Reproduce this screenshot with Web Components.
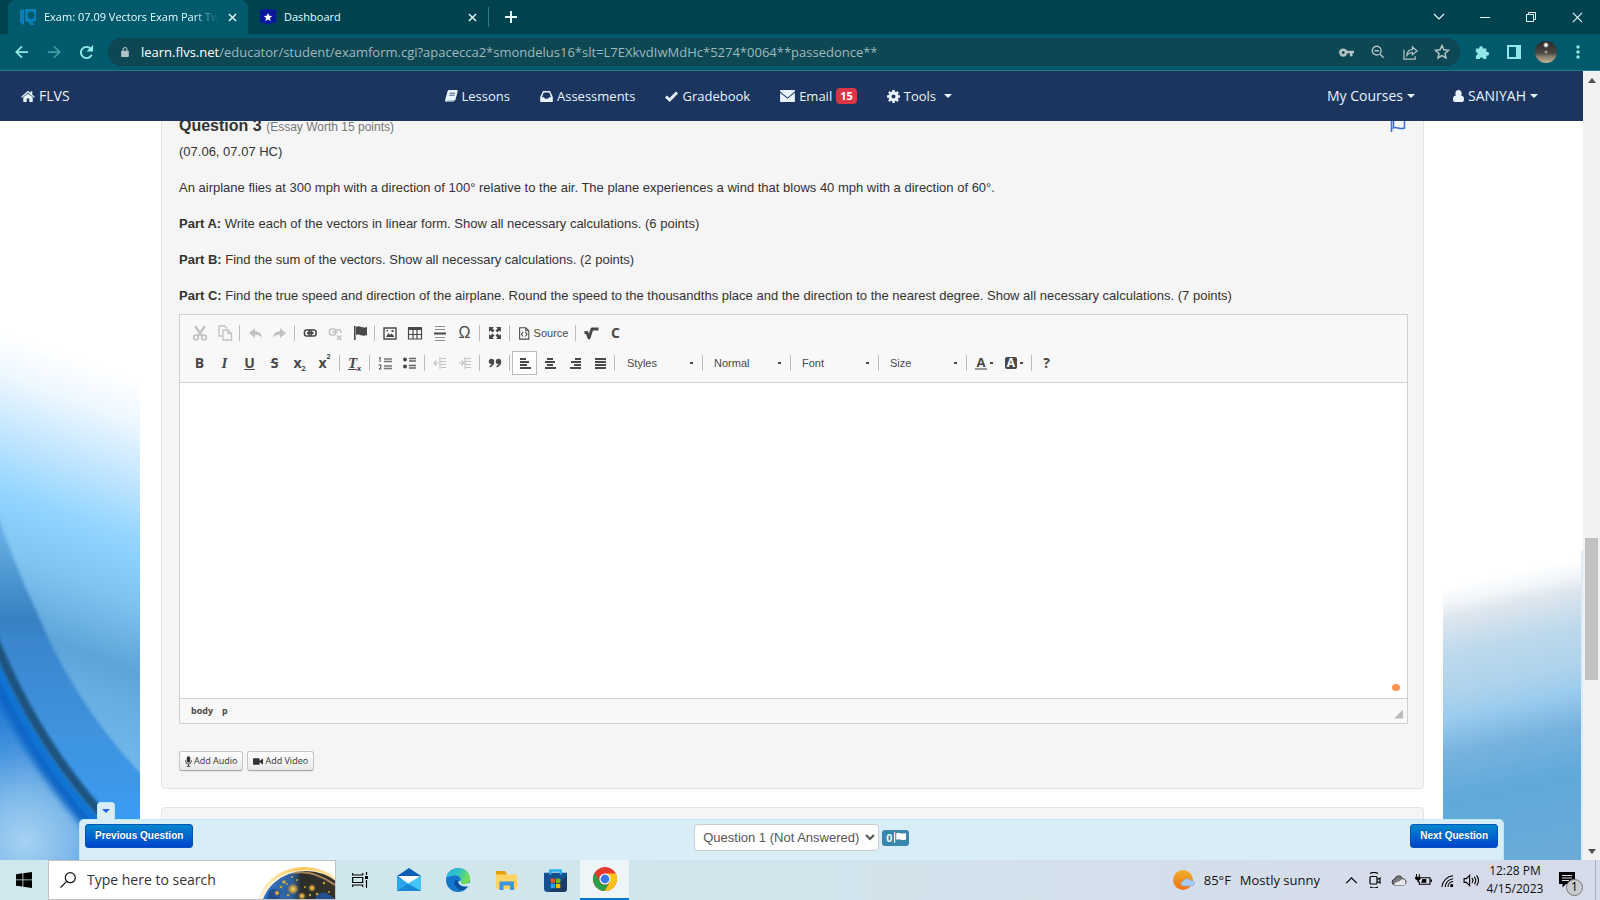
<!DOCTYPE html>
<html lang="en">
<head>
<meta charset="utf-8">
<title>Exam: 07.09 Vectors Exam Part Two</title>
<style>
html,body{margin:0;height:100%;overflow:hidden;background:#fff}
body{font-family:"Liberation Sans",Arial,sans-serif;font-size:13px;color:#333}
</style>
</head>
<body>
<exam-desktop></exam-desktop>
<script>
const UI = '"Open Sans","Noto Sans",sans-serif';
function define(name, css, html, ready) {
  const t = document.createElement('template');
  t.innerHTML = `<style>*{box-sizing:border-box}${css}</style>${html}`;
  customElements.define(name, class extends HTMLElement {
    connectedCallback() {
      if (this.shadowRoot) return;
      this.attachShadow({mode: 'open'}).appendChild(t.content.cloneNode(true));
      if (ready) ready.call(this, this.shadowRoot);
    }
  });
}

/* ---------- icons: [viewBox width, viewBox height, markup] ---------- */
const S = 'fill="none" stroke="currentColor"';
const ICONS = {
  close: [10,10,`<path ${S} stroke-width="1.5" d="M1 1l8 8M9 1l-8 8"/>`],
  closeThin: [12,12,`<path ${S} stroke-width="1.2" d="M1 1l10 10M11 1L1 11"/>`],
  plus: [12,12,`<path ${S} stroke-width="2" d="M6 0v12M0 6h12"/>`],
  chevDown: [12,8,`<path ${S} stroke-width="1.2" d="M1 1l5 5 5-5"/>`],
  min: [10,10,`<path ${S} d="M0 5.500h10"/>`],
  restore: [10,10,`<path ${S} d="M.5 2.500h7v7h-7zM2.500 2.500v-2h7v7h-2"/>`],
  flvs: [16,16,`<path fill="#0b7fb8" d="M0 1l4-1v16l-2-1-2-2zM5 0h11v12l-4 1 3 3h-4l-3-3-3-1z"/><path fill="#005a6b" d="M8 4c2-2 5-2 6 0 1 3 0 6-3 6S7 7 8 4z"/>`],
  badge: [16,16,`<path fill="#0a189c" d="M0 1q8-2 16 0v13l-5 0-3 2-3-2H0z"/><path fill="#fff" d="M8 4l1.200 2.800 3 .2-2.300 2 .8 3L8 10.400 5.300 12l.8-3-2.300-2 3-.2z"/>`],
  back: [16,16,`<path ${S} stroke-width="2" d="M15 8H2M8 1.500L1.500 8 8 14.500"/>`],
  fwd: [16,16,`<path ${S} stroke-width="2" d="M1 8h13M8 1.500L14.500 8 8 14.500"/>`],
  reload: [16,16,`<path ${S} stroke-width="2" d="M13.500 10.500A6 6 0 1 1 12.500 4"/><path fill="currentColor" d="M15 0v7H8z"/>`],
  lock: [10,13,`<path fill="currentColor" d="M1 5h8a1 1 0 0 1 1 1v6a1 1 0 0 1-1 1H1a1 1 0 0 1-1-1V6a1 1 0 0 1 1-1z"/><path ${S} stroke-width="1.400" d="M2.500 6V3.200a2.500 2.500 0 0 1 5 0V6"/>`],
  key: [16,16,`<circle cx="4.500" cy="8" r="3" ${S} stroke-width="2.800"/><path ${S} stroke-width="2.800" d="M8 7.500h8M13 8v4"/>`],
  zoomOut: [16,16,`<circle cx="6.500" cy="6.500" r="5" ${S} stroke-width="1.600"/><path ${S} stroke-width="1.600" d="M10.500 10.500l4 4M4 6.500h5"/>`],
  share: [16,16,`<path ${S} stroke-width="1.300" d="M1 5v10h12v-3M4 11c.5-4 3-6 6-6V2l5 4.500-5 4V8c-3 0-4.500 1-6 3z"/>`],
  star: [16,16,`<path ${S} stroke-width="1.500" d="M8 1.500l1.900 4.300 4.600.5-3.500 3.100 1 4.600-4-2.400L4 14l1-4.600L1.500 6.300l4.600-.5z"/>`],
  puzzle: [16,16,`<path fill="currentColor" d="M1 4h4a2 2 0 1 1 4-1v1h4v4a2.200 2.200 0 1 1 0 4v4H9.500a2 2 0 0 0-4 0H1v-4a2 2 0 0 0 0-4z"/>`],
  panel: [14,14,`<path ${S} stroke-width="2" d="M1 1h12v12H1z"/><path fill="currentColor" d="M9 0h5v14H9z"/>`],
  dots: [4,14,`<g fill="currentColor"><circle cx="2" cy="2" r="1.700"/><circle cx="2" cy="7" r="1.700"/><circle cx="2" cy="12" r="1.700"/></g>`],
  home: [16,14,`<path fill="currentColor" d="M8 1L0 8l1 1 7-6 7 6 1-1-3-2.600V1.500h-2v2zM8 4L2.500 8.500V14h4v-4h3v4h4V8.500z"/>`],
  book: [16,15,`<path fill="currentColor" d="M5 0h9.500c1 0 1.500.8 1.200 1.800L13 12c-.3 1-1 1.500-2 1.500H2.500c-.6 0-.6.800 0 .8H11l-.3.700H2C.5 15-.3 13.500.2 12L3 2C3.300.8 4 0 5 0z"/><path stroke="#1c355e" d="M6 4h6.500M5.300 6.500h6.500" fill="none"/>`],
  inbox: [16,14,`<path fill="currentColor" fill-rule="evenodd" d="M3.500 0h9L16 7.500V14H0V7.500zM4.500 2L2.200 8H5l1 2h4l1-2h2.800L11.500 2z"/>`],
  check: [16,13,`<path ${S} stroke-width="3.600" d="M1.200 6.500l4.500 4.300L14.800 1.500"/>`],
  mail: [16,13,`<path fill="currentColor" d="M0 0h16v1.500L8 8 0 1.500zM0 3l8 6.500L16 3v10H0z"/>`],
  gear: [16,16,`<circle cx="8" cy="8" r="4.300" ${S} stroke-width="3.600"/><path ${S} stroke-width="3" d="M8 0v3M8 13v3M0 8h3M13 8h3M2.300 2.300l2 2M11.700 11.700l2 2M2.300 13.700l2-2M11.700 4.300l2-2"/>`],
  user: [14,15,`<path fill="currentColor" d="M7 0c2.500 0 4 2 4 4.200S9.500 9 7 9 3 6.500 3 4.200 4.500 0 7 0zM3 7c2.500 2.400 5.500 2.400 8 0 2 .5 3 2 3 4.500 0 2.700-1 3.500-2.500 3.500h-9C1 15 0 14.200 0 11.500 0 9 1 7.500 3 7z"/>`],
  caret: [8,4,`<path fill="currentColor" d="M0 0h8L4 4z"/>`],
  flagLine: [16,16,`<path ${S} stroke-width="1.500" d="M1.500 1v15M3.500 3c3-2 6 2 11 0v9c-5 2-8-2-11 0z"/>`],
  flagSolid: [16,14,`<path fill="currentColor" d="M0 0h1.600v14H0zM3 1.500c4-2.500 7 2 13-.5v8.500c-5 2.500-8-2-13 .5z"/>`],
  cut: [16,16,`<path ${S} stroke-width="2.200" d="M3 1l7 10M13 1L6 11"/><circle cx="4" cy="12.500" r="2.300" ${S} stroke-width="1.800"/><circle cx="12" cy="12.500" r="2.300" ${S} stroke-width="1.800"/>`],
  copy: [16,16,`<path ${S} stroke-width="1.300" d="M5 11H2V1h5.500L10 3.500M6 5h5l3.500 3.500V15H6zM11 5v3.500h3.500"/>`],
  undo: [16,16,`<path fill="currentColor" d="M2 8l6-5v3.200c4 0 6.500 2 7 6.800-1.500-2.500-3.500-3.300-7-3.300V13z"/>`],
  redo: [16,16,`<path fill="currentColor" d="M14 8L8 3v3.200c-4 0-6.500 2-7 6.800 1.500-2.500 3.500-3.300 7-3.300V13z"/>`],
  link: [16,16,`<rect x="2.500" y="5" width="7" height="6" rx="2" ${S} stroke-width="1.600"/><rect x="7" y="5" width="7" height="6" rx="2" ${S} stroke-width="1.600"/><path ${S} stroke-width="2" d="M5 8h6.500"/>`],
  unlink: [16,16,`<rect x="2.500" y="4" width="6" height="6" rx="2" ${S} stroke-width="1.600"/><path ${S} stroke-width="1.600" d="M5 7h6M8 4.800h4q2 0 2 3M10 10.500l4.500 4.500M14.500 10.500L10 15"/>`],
  flag: [16,16,`<path fill="currentColor" d="M2 1h1.600v14H2zM4 2c4-2.500 6 2 11 0v8c-5 2.500-7-2-11 0z"/>`],
  image: [16,16,`<path ${S} stroke-width="1.400" d="M2 3h12v11H2z"/><path fill="currentColor" d="M4 12l2.500-4L8 10l1.500-1.500L12 11v1zM9.500 5h2v2h-2zM4.500 5h1.500v1.500H4.500z"/>`],
  table: [16,16,`<path ${S} stroke-width="1.200" d="M1.500 3h13v11h-13zM6 5v9M10 5v9M1.500 9.500h13"/><path fill="currentColor" d="M1 2h14v3H1z"/>`],
  hr: [16,16,`<path ${S} d="M3 1.500h10M3 4.500h10M3 12.500h10M3 15.500h10" opacity=".6"/><path fill="currentColor" d="M2 7.500h12v2H2z"/>`],
  max: [16,16,`<g fill="currentColor"><path d="M2 2h5L5.500 3.500 7.500 5.500l-2 2-2-2L2 7zM14 2v5l-1.500-1.500-2 2-2-2 2-2L9 2zM2 14V9l1.500 1.500 2-2 2 2-2 2L7 14zM14 14H9l1.500-1.500-2-2 2-2 2 2L14 9z"/></g>`],
  source: [16,16,`<path ${S} stroke-width="1.200" d="M3 2h7l3.500 3.500V15H3zM10 2v3.500h3.500M7 7L5 9.500 7 12M9.500 7l2 2.500-2 2.500"/>`],
  sqrt: [16,16,`<path ${S} stroke-width="2.800" stroke-linejoin="round" d="M1.500 7.500h2.500L6 13l3-9h6.500"/>`],
  ol: [16,16,`<path ${S} stroke-width="1.500" d="M7 4h8M7 6.500h8M7 11h8M7 13.500h8" opacity=".75"/><path ${S} d="M3 2v5M2 3h1.500M1.500 10h2.500v2l-2 2h2.500"/>`],
  ul: [16,16,`<circle cx="3" cy="4.500" r="2" fill="currentColor"/><circle cx="3" cy="11.500" r="2" fill="currentColor"/><path ${S} stroke-width="1.500" d="M7 3.500h7M7 6h7M7 10.500h7M7 13h7" opacity=".85"/>`],
  outdent: [16,16,`<path ${S} stroke-width="1.200" d="M8 2v12M9 3.500h5M9 6.500h5M9 9.500h5M9 12.500h5M2 8h5M4.500 5.500L2 8l2.500 2.500"/>`],
  indent: [16,16,`<path ${S} stroke-width="1.200" d="M8 2v12M9 3.500h5M9 6.500h5M9 9.500h5M9 12.500h5M2 8h5M4.500 5.500L7 8l-2.500 2.500"/>`],
  quote: [16,16,`<circle cx="4.500" cy="6.500" r="2.700" fill="currentColor"/><circle cx="11.500" cy="6.500" r="2.700" fill="currentColor"/><path ${S} stroke-width="1.600" d="M6.400 6.500q0 4-3.900 5.200M13.400 6.500q0 4-3.900 5.200"/>`],
  left: [16,16,`<path ${S} stroke-width="2" d="M3 4h6M3 7h9M3 10h7M3 13h11"/>`],
  center: [16,16,`<path ${S} stroke-width="2" d="M5 4h6M3 7h10M5 10h6M3 13h11"/>`],
  right: [16,16,`<path ${S} stroke-width="2" d="M8 4h6M4 7h10M7 10h7M3 13h11"/>`],
  justify: [16,16,`<path ${S} stroke-width="2" d="M3 4h11M3 7h11M3 10h11M3 13h11"/>`],
  mic: [8,12,`<path fill="currentColor" d="M4 0a2 2 0 0 1 2 2v3.500a2 2 0 0 1-4 0V2a2 2 0 0 1 2-2z"/><path ${S} d="M.8 4.500V6a3.200 3 0 0 0 6.400 0V4.500M4 9v2.500M2 11.500h4"/>`],
  video: [12,8,`<path fill="currentColor" d="M1 0h6a1 1 0 0 1 1 1v6a1 1 0 0 1-1 1H1a1 1 0 0 1-1-1V1a1 1 0 0 1 1-1zM8 3.500L12 0v8L8 4.500z"/>`],
  windows: [16,16,`<path fill="currentColor" d="M0 2.200L6.500 1.300v6.200H0zM7.300 1.200L16 0v7.500H7.300zM0 8.300h6.500v6.300L0 13.700zM7.300 8.300H16V16l-8.700-1.200z"/>`],
  search: [16,16,`<circle cx="10.300" cy="5.700" r="5" ${S} stroke-width="1.200"/><path ${S} stroke-width="1.200" d="M6.700 9.300L.5 15.500"/>`],
  taskview: [16,16,`<path ${S} stroke-width="1.200" d="M.7 1v2h10V1M.7 5.500h10v5H.7zM.7 15v-2h10v2M14.500 0v3M14.500 8v8"/><path fill="currentColor" d="M13 4h3v3h-3z"/>`],
  mailApp: [24,24,`<path fill="#0d5fb4" d="M0 8L12 0l12 8v4H0z"/><path fill="#fff" d="M1 8h22l-11 9z"/><path fill="#2ba6ea" d="M0 8l12 8 12-8v15H0z"/><path fill="#45c4f5" d="M24 8v15L11 15.300z"/><path fill="#1786d6" d="M0 23l11-7 13 7z"/>`],
  edge: [24,24,`<defs><linearGradient id="a" x1="0" y1="0" x2="1" y2=".4"><stop offset="0" stop-color="#29b4e8"/><stop offset=".5" stop-color="#2fc3c8"/><stop offset="1" stop-color="#74df52"/></linearGradient></defs><circle cx="12" cy="12" r="12" fill="#1477c9"/><path fill="url(#a)" d="M.5 9.500C2 3.500 7 0 12.300 0 19 0 24 5 24 10.500c0 4-3 6-6 6-3.500 0-5-1.500-3.800-3C16 11 13.500 7.500 9.500 7.500 5 7.500 2 9 .5 9.500z"/><path fill="#0f4f9c" d="M9 12c-2 5 2 10 7.500 10 2.500-.8 4.500-2.500 5.800-4.700-5 2.500-11.300.7-10.500-5.300z"/><path fill="#d3e9f0" d="M14.600 12.300c-.7 1.800.3 4 3.400 4 2 .1 3.700-.6 5-1.700l1.200 1-1.500 2.700c-5 1-9.500-1-10.400-4.400z"/>`],
  folder: [24,24,`<path fill="#e3a008" d="M1 3h9l2 3v4H1z"/><path fill="#fcd364" d="M1 6.500h21V21H1z"/><path fill="#3d93dd" d="M4.500 13.500h14.500V22h-4v-4.500H8.500V22h-4z"/>`],
  store: [24,24,`<path fill="none" stroke="#28b1ee" stroke-width="2" d="M6.500 7V1.500h11V7"/><path fill="#15518f" d="M0 4h24v16q0 4-4 4H4q-4 0-4-4z"/><path fill="#1b3a66" d="M24 7v13q0 4-4 4H5z"/><path fill="none" stroke="#28b1ee" stroke-width="2" d="M6.500 6V1.500h11V6"/><path fill="#f05023" d="M7 10h4.500v4.500H7z"/><path fill="#7db900" d="M12.500 10H17v4.500h-4.500z"/><path fill="#22a6f0" d="M7 15.500h4.500V20H7z"/><path fill="#fdb900" d="M12.500 15.500H17V20h-4.500z"/>`],
  chrome: [24,24,`<circle cx="12" cy="12" r="12" fill="#e33b2e"/><path fill="#fbc116" d="M12 6.500h10.700A12 12 0 0 1 11.500 24l5.300-9z"/><path fill="#2b9f48" d="M1.600 6A12 12 0 0 0 11.500 24l5.300-9.200A5.500 5.500 0 0 1 7 14.700z"/><circle cx="12" cy="12" r="5.600" fill="#fff"/><circle cx="12" cy="12" r="4.400" fill="#3b78e7"/>`],
  weather: [22,20,`<defs><linearGradient id="w" x1="0" y1="0" x2="0" y2="1"><stop offset="0" stop-color="#f2b02c"/><stop offset="1" stop-color="#ef7114"/></linearGradient></defs><circle cx="10" cy="10" r="10" fill="url(#w)"/><path fill="#a9ccf5" stroke="#7fabe6" stroke-width=".6" d="M10.500 16a2.500 2.500 0 0 1 0-5 4 4 0 0 1 7-.5c3 0 4 1.500 4 3s-1 2.500-2.500 2.500z"/>`],
  chevUp: [14,8,`<path ${S} stroke-width="1.400" d="M1 7l6-6 6 6"/>`],
  meet: [14,16,`<rect x="2" y="4.500" width="7" height="7.500" rx="1" ${S} stroke-width="1.200"/><path ${S} stroke-width="1.200" d="M9.500 7.500l2.500-1.500v5L9.500 9.500M2 1.500q4-2 8 0M2 15q4 2 8 0"/>`],
  cloud: [18,12,`<path fill="#77797c" stroke="#222" d="M4 11a3.300 3.300 0 0 1 0-6.500C5.500 0 11.500-.5 13 4c5 0 5 6.500 1 7z"/><path fill="#e8e8e8" d="M3.500 11C4 8 7 7.500 9 7l3-2c3.500-2 6 3 3 6z"/>`],
  battery: [18,14,`<path ${S} stroke-width="1.200" d="M6 4h10v7H4.500V8M16.500 6.500h1v2"/><path fill="currentColor" d="M8 5.500h4v4H6.500zM0 3h6v2.500L4 7v2H2.500V7L0 5.500zM1 0h1v3H1zM4 0h1v3H4z"/>`],
  wifi: [14,14,`<path ${S} stroke-width="1.100" d="M1 14A13 13 0 0 1 13 2M4.500 14A9.500 9.500 0 0 1 13 5M7.500 14A6 6 0 0 1 13 8"/><path fill="currentColor" d="M10 11h3v3h-3z"/>`],
  volume: [18,14,`<path ${S} stroke-width="1.200" d="M1 5h2.500L7 1.500v11L3.500 9H1zM9.500 4.500q2 2.500 0 5M12 3q3 4 0 8M14.500 1.500q4 5.500 0 11"/>`],
  notes: [16,16,`<path fill="currentColor" d="M0 0h16v12H7l-3.500 3.500V12H0z"/><path stroke="#d6dcea" d="M3 3.500h10M3 6h10M3 8.500h7" fill="none"/>`],
  arrowUp: [8,5,`<path fill="currentColor" d="M4 0l4 5H0z"/>`],
  arrowDown: [8,5,`<path fill="currentColor" d="M0 0h8L4 5z"/>`]
};
customElements.define('ui-icon', class extends HTMLElement {
  connectedCallback() {
    if (this.shadowRoot) return;
    const [w, h, m] = ICONS[this.getAttribute('name')];
    const width = +this.getAttribute('w') || w;
    this.attachShadow({mode: 'open'}).innerHTML =
      `<style>:host{display:inline-flex;flex:none}svg{display:block}</style>
       <svg width="${width}" height="${Math.round(width * h / w)}" viewBox="0 0 ${w} ${h}" aria-hidden="true">${m}</svg>`;
  }
});

/* ---------- browser chrome ---------- */
define('browser-tab', `
:host{display:flex;align-items:center;height:34px;width:240px;padding:0 9px 0 12px;color:#eafcff;font:11px/16px ${UI}}
:host([active]){background:#005a6b;border-radius:8px 8px 0 0}
span{flex:1;margin:0 8px;white-space:nowrap;overflow:hidden}
:host([active]) span{-webkit-mask:linear-gradient(90deg,#000 86%,transparent 100%);mask:linear-gradient(90deg,#000 86%,transparent 100%)}
button{display:flex;border:0;background:none;padding:2px;color:inherit}`,
`<slot name="icon"></slot><span><slot></slot></span><button aria-label="Close tab"><ui-icon name="close" w="9"></ui-icon></button>`);

define('tab-strip', `
:host{display:flex;height:34px;background:#00434f;padding-left:8px;align-items:center;color:#eafcff}
button{display:flex;align-items:center;justify-content:center;border:0;background:none;color:inherit;padding:0;width:46px;height:34px}
.new{width:44px;border-left:1px solid #3b7680;height:20px}
.space{flex:1}`,
`<browser-tab active><ui-icon slot="icon" name="flvs"></ui-icon>Exam: 07.09 Vectors Exam Part Two</browser-tab>
<browser-tab><ui-icon slot="icon" name="badge"></ui-icon>Dashboard</browser-tab>
<button class="new" aria-label="New tab"><ui-icon name="plus"></ui-icon></button><div class="space"></div>
<button aria-label="Search tabs"><ui-icon name="chevDown"></ui-icon></button>
<button aria-label="Minimize"><ui-icon name="min"></ui-icon></button>
<button aria-label="Restore"><ui-icon name="restore"></ui-icon></button>
<button aria-label="Close"><ui-icon name="closeThin" w="11"></ui-icon></button>`);

define('address-bar', `
:host{display:flex;align-items:center;height:37px;background:#005a6b;border-bottom:1px solid #1e7f8a;padding:0 6px;color:#92e8e8}
button{display:flex;align-items:center;justify-content:center;width:32px;height:28px;border:0;background:none;padding:0;color:inherit;flex:none}
.dim{opacity:.45}
.omni{flex:1;display:flex;align-items:center;height:28px;border-radius:14px;background:#0d4753;color:#b5c2c5;padding:0 2px 0 13px;margin:0 6px}
.url{flex:1;margin-left:12px;font:13px/20px ${UI};color:#9fb9be;white-space:nowrap}
.url b{font-weight:400;color:#fff}
.avatar{width:22px;height:22px;border-radius:50%;background:radial-gradient(circle at 11px 4px,#fff 0 1px,transparent 3px),radial-gradient(circle at 11px 11px,#a09080 0 1px,transparent 2px),linear-gradient(#2c2826,#4a4645 55%,#857a6a 70%,#c9b898)}`,
`<button aria-label="Back"><ui-icon name="back" w="14"></ui-icon></button>
<button class="dim" aria-label="Forward"><ui-icon name="fwd" w="14"></ui-icon></button>
<button aria-label="Reload"><ui-icon name="reload" w="15"></ui-icon></button>
<div class="omni"><ui-icon name="lock" w="8"></ui-icon><span class="url"><b>learn.flvs.net</b>/educator/student/examform.cgi?apacecca2*smondelus16*slt=L7EXkvdIwMdHc*5274*0064**passedonce**</span>
<button aria-label="Passwords"><ui-icon name="key" w="15"></ui-icon></button><button aria-label="Zoom"><ui-icon name="zoomOut" w="14"></ui-icon></button><button aria-label="Share"><ui-icon name="share" w="15"></ui-icon></button><button aria-label="Bookmark"><ui-icon name="star" w="16"></ui-icon></button></div>
<button aria-label="Extensions"><ui-icon name="puzzle" w="14"></ui-icon></button><button aria-label="Side panel"><ui-icon name="panel"></ui-icon></button><button aria-label="Profile"><span class="avatar"></span></button><button aria-label="Menu"><ui-icon name="dots" w="4"></ui-icon></button>`);

/* ---------- site navigation ---------- */
define('nav-link', `
:host{display:block}
a{display:flex;align-items:center;gap:4px;color:#e9f3fb;text-decoration:none;font:14px/20px ${UI};white-space:nowrap}
:host([compact]) a{font-size:13px}`,
`<a href="#"><slot></slot></a>`);
define('site-nav', `
:host{display:flex;justify-content:space-between;align-items:center;height:50px;flex:none;background:#1c355e;padding:0 45px 0 21px;position:relative;z-index:2}
nav{display:flex;gap:30px}
.user{gap:38px}
.count{background:#dc3545;color:#fff;border-radius:4px;font:bold 11px/16px ${UI};padding:0 4px}
.wide{margin-left:4px}`,
`<nav><nav-link><ui-icon name="home" w="14"></ui-icon>FLVS</nav-link></nav>
<nav><nav-link compact><ui-icon name="book" w="13"></ui-icon>Lessons</nav-link>
<nav-link compact><ui-icon name="inbox" w="13"></ui-icon>Assessments</nav-link>
<nav-link compact><ui-icon name="check" w="13"></ui-icon>Gradebook</nav-link>
<nav-link compact><ui-icon name="mail" w="15"></ui-icon>Email<span class="count">15</span></nav-link>
<nav-link compact><ui-icon name="gear" w="13"></ui-icon>Tools<ui-icon class="wide" name="caret" w="8"></ui-icon></nav-link></nav>
<nav class="user"><nav-link>My Courses<ui-icon name="caret" w="8"></ui-icon></nav-link>
<nav-link><ui-icon name="user" w="11"></ui-icon>SANIYAH<ui-icon name="caret" w="8"></ui-icon></nav-link></nav>`);

/* ---------- decorative page sides ---------- */
define('side-art', `:host{display:block;overflow:hidden}svg{display:none;width:100%;height:100%}
:host([side=left]) .l,:host([side=right]) .r{display:block}`,
`<svg class="l" viewBox="0 0 140 739" preserveAspectRatio="none" aria-hidden="true"><defs>
<linearGradient id="sky" gradientUnits="userSpaceOnUse" x1="0" y1="208" x2="-190" y2="728"><stop offset="0" stop-color="#fff"/><stop offset=".07" stop-color="#eff8ff"/><stop offset=".16" stop-color="#c8e8ff"/><stop offset=".28" stop-color="#90d4ff"/><stop offset=".38" stop-color="#7fc3f0"/><stop offset=".5" stop-color="#5ca4d9"/><stop offset=".56" stop-color="#66aee3"/><stop offset=".75" stop-color="#7cc0f0"/><stop offset="1" stop-color="#7cc0f0"/></linearGradient>
<linearGradient id="band" gradientUnits="userSpaceOnUse" x1="0" y1="400" x2="0" y2="700"><stop offset="0" stop-color="#6db5e8"/><stop offset=".33" stop-color="#3580c0"/><stop offset=".4" stop-color="#3a86ce"/><stop offset=".7" stop-color="#3f92dd"/><stop offset="1" stop-color="#3a9cf4"/></linearGradient>
<radialGradient id="glow" gradientUnits="userSpaceOnUse" cx="25" cy="720" r="150"><stop offset="0" stop-color="#a6d2f2"/><stop offset=".3" stop-color="#80baea"/><stop offset=".65" stop-color="#3f8fdc"/><stop offset="1" stop-color="#1c74d0"/></radialGradient>
<filter id="b1" x="-20%" width="140%"><feGaussianBlur stdDeviation="1.5"/></filter><filter id="b2" x="-30%" width="160%"><feGaussianBlur stdDeviation="3"/></filter></defs>
<rect width="140" height="739" fill="url(#sky)"/>
<path filter="url(#b1)" fill="url(#band)" d="M-10 370Q10 435 35 487Q75 585 146 658V760H-10z"/>
<path filter="url(#b1)" fill="url(#glow)" d="M-10 530Q25 610 62 662T140 745V760H-10z"/>
<path filter="url(#b2)" fill="none" stroke="#0b66c6" stroke-width="15" d="M-10 545Q22 615 62 668T130 738"/>
<path filter="url(#b1)" fill="none" stroke="#1173d6" stroke-width="6" d="M-10 532Q22 604 62 658T135 730"/>
<path filter="url(#b1)" fill="none" stroke="#1a527f" stroke-width="9" d="M-10 508Q22 588 67 650T140 722"/></svg>
<svg class="r" viewBox="0 0 140 739" preserveAspectRatio="none" aria-hidden="true"><defs>
<linearGradient id="dusk" gradientUnits="userSpaceOnUse" x1="0" y1="465" x2="66" y2="768"><stop offset="0" stop-color="#fff"/><stop offset=".05" stop-color="#f4f8fb"/><stop offset=".11" stop-color="#dce5ed"/><stop offset=".22" stop-color="#bdd9ec"/><stop offset=".34" stop-color="#aed3ec"/><stop offset=".42" stop-color="#9bccee"/><stop offset=".53" stop-color="#78b3de"/><stop offset=".68" stop-color="#5fa9db"/><stop offset="1" stop-color="#6cabd8"/></linearGradient></defs>
<rect width="140" height="739" fill="url(#dusk)"/><path stroke="#dcecf8" stroke-width="2" d="M139 430v309"/></svg>`);

/* ---------- editor ---------- */
define('tool-button', `
:host{display:block}
button{display:flex;align-items:center;justify-content:center;gap:3px;width:25px;height:24px;border:1px solid transparent;background:none;padding:0;color:#484848;font:12px/16px "Liberation Sans",Arial,sans-serif;white-space:nowrap}
:host([off]) button{opacity:.3}
:host([on]) button{background:#fff;border-color:#bcbcbc}
:host([wide]) button{width:61px}
:host([color]) button{width:30px}
:host([glyph]) button{font:bold 14px/16px ${UI}}
::slotted(small){font-size:7px;line-height:10px;margin-left:-3px}`,
`<button><slot></slot></button>`, function (r) { r.querySelector('button').setAttribute('aria-label', this.title || this.textContent); this.removeAttribute('title'); });
define('tool-sep', `:host{display:block;width:1px;height:16px;margin:0 2px;background:#bcbcbc}`, ``);
define('tool-combo', `
:host{display:block;width:83px}
button{display:flex;align-items:center;justify-content:space-between;width:100%;height:24px;border:0;background:none;padding:0 7px 1px 10px;color:#484848;font:11px/16px "Liberation Sans",Arial,sans-serif}
:host(:nth-of-type(n+2)) button{padding-left:9px}
i{width:3px;height:2px;background:#484848}`, `<button aria-haspopup="listbox"><slot></slot><i></i></button>`);

const tb = (n, t, a = '') => `<tool-button title="${t}" ${a}><ui-icon name="${n}" w="16"></ui-icon></tool-button>`;
const gl = (h, t, a = '') => `<tool-button glyph title="${t}" ${a}>${h}</tool-button>`;
const sep = '<tool-sep></tool-sep>';
define('rich-editor', `
:host{display:block;border:1px solid #d1d1d1;background:#fff;margin-top:9px}
.bar{background:#f8f8f8;border-bottom:1px solid #d1d1d1;padding:6px 7px 7px;display:grid;gap:6px}
.row{display:flex;align-items:center;height:24px}
.area{display:grid;position:relative}
textarea{border:0;outline:0;resize:none;height:315px;width:100%;padding:16px;display:block;font:13px/20px "Liberation Sans",sans-serif}
.dot{position:absolute;right:7px;bottom:7px;width:8px;height:7px;border-radius:50%;background:#ff934d}
.path{display:flex;justify-content:space-between;align-items:center;height:25px;border-top:1px solid #d1d1d1;background:#f8f8f8;padding:0 4px 0 11px;font:bold 9px/14px ${UI};color:#484848}
.path a{color:inherit;text-decoration:none;margin-right:9px}
.grip{width:9px;height:9px;background:#bcbcbc;clip-path:polygon(100% 0,100% 100%,0 100%);margin-top:6px}
.u{text-decoration:underline}.s{text-decoration:line-through}.it{font-style:italic;font-family:"Liberation Serif",serif;font-size:15px}
.fa{display:block;font-size:13px;line-height:12px;border-bottom:2px solid #999;padding:0 2px}
.fb{font-size:12px;line-height:12px;background:#484848;color:#fff;border-radius:2px;padding:0 2px}
.t{width:3px;height:2px;background:#484848}
.omega{font-family:"Liberation Sans",sans-serif;font-size:16px;font-weight:400}
.src{font-size:11px}
.sub{align-self:flex-end}.sup{align-self:flex-start}`,
`<div class="bar"><div class="row">${tb('cut','Cut','off')}${tb('copy','Copy','off')}${sep}${tb('undo','Undo','off')}${tb('redo','Redo','off')}${sep}${tb('link','Link')}${tb('unlink','Unlink','off')}${tb('flag','Anchor')}${sep}${tb('image','Image')}${tb('table','Table')}${tb('hr','Horizontal line')}${gl('<span class="omega">Ω</span>','Special character')}${sep}${tb('max','Maximize')}${sep}<tool-button wide><ui-icon name="source" w="14"></ui-icon><span class="src">Source</span></tool-button>${sep}${tb('sqrt','Math')}${gl('C','Chemistry')}</div>
<div class="row">${gl('B','Bold')}${gl('<span class="it">I</span>','Italic')}${gl('<span class="u">U</span>','Underline')}${gl('<span class="s">S</span>','Strike')}${gl('x<small class="sub">2</small>','Subscript')}${gl('x<small class="sup">2</small>','Superscript')}${sep}${gl('<span class="it u">T</span><small class="sub">x</small>','Remove format')}${sep}${tb('ol','Numbered list')}${tb('ul','Bulleted list')}${sep}${tb('outdent','Outdent','off')}${tb('indent','Indent','off')}${sep}${tb('quote','Block quote')}${sep}${tb('left','Align left','on')}${tb('center','Center')}${tb('right','Align right')}${tb('justify','Justify')}${sep}<tool-combo>Styles</tool-combo>${sep}<tool-combo>Normal</tool-combo>${sep}<tool-combo>Font</tool-combo>${sep}<tool-combo>Size</tool-combo>${sep}${gl('<span class="fa">A</span><i class="t"></i>','Text color','color')}${gl('<span class="fb">A</span><i class="t"></i>','Background color','color')}${sep}${gl('?','Help')}</div></div>
<div class="area"><textarea aria-label="Essay answer"></textarea><span class="dot"></span></div>
<div class="path"><span><a href="#">body</a><a href="#">p</a></span><span class="grip"></span></div>`);

define('media-button', `
:host{display:block}
button{display:flex;align-items:center;gap:2px;height:20px;border:1px solid #c5c5c5;border-bottom-color:#a8a8a8;border-radius:3px;background:linear-gradient(#fff,#e8e8e8);padding:0 5px;color:#333;font:9px/14px ${UI};box-shadow:0 1px 1px #0001}`,
`<button><slot></slot></button>`);

define('question-card', `
:host{display:block;background:#f5f5f5;border:1px solid #e3e3e3;border-radius:4px;padding:19px 15px 17px 17px}
header{display:flex;justify-content:space-between;height:20px;margin-bottom:7px}
h2{font:bold 16px/20px "Liberation Sans",Arial,sans-serif;margin:0;color:#333}
small{font-size:12px;font-weight:400;color:#777}
header button{border:0;background:none;padding:0 2px 0 0;color:#3b6fd8;display:flex}
::slotted(p){margin:0 0 18px;font-size:13px;line-height:18px}
::slotted(p:last-of-type){margin-bottom:0}
::slotted(.media){display:flex;gap:4px;margin-top:27px}`,
`<header><h2><slot name="title"></slot> <small><slot name="worth"></slot></small></h2><button aria-label="Flag question"><ui-icon name="flagLine" w="16"></ui-icon></button></header><slot></slot>`);

define('question-bar', `
:host{display:flex;justify-content:space-between;align-items:flex-start;height:41px;background:#d9edf7;border:1px solid #bce8f1;border-bottom:0;border-radius:5px 5px 0 0;padding:4px 5px}
.go{height:24px;border:1px solid #0055b8;border-radius:3px;background:linear-gradient(#08c,#04c);color:#fff;font:bold 10px/16px "Liberation Sans",Arial,sans-serif;padding:0 9px;text-shadow:0 -1px 0 #0004}
.mid{display:flex;align-items:center;gap:3px}
select{height:27px;width:185px;border:1px solid #ccc;border-radius:4px;background:#fff;color:#555;font:13px/20px "Liberation Sans",Arial,sans-serif;padding:0 2px 0 4px}
.flags{display:flex;align-items:center;gap:2px;background:#3a87ad;color:#fff;border-radius:3px;font:bold 11px/16px "Liberation Sans",Arial,sans-serif;padding:0 3px 0 4px}
.hide{position:absolute;left:17px;top:-18px;width:18px;height:19px;border:1px solid #bce8f1;border-bottom:0;border-radius:4px 4px 0 0;background:#d9edf7;color:#2a62e0;padding:6px 0 0;display:flex;justify-content:center}`,
`<button class="hide" aria-label="Hide bar"><ui-icon name="caret" w="8"></ui-icon></button>
<button class="go">Previous Question</button>
<div class="mid"><select aria-label="Go to question"><option>Question 1 (Not Answered)</option></select><span class="flags">0<ui-icon name="flagSolid" w="12"></ui-icon></span></div>
<button class="go">Next Question</button>`);

define('scroll-track', `
:host{display:flex;flex-direction:column;align-items:center;width:17px;background:#f1f1f1;color:#505050;padding:7px 0 6px}
.before{flex:454}.thumb{flex:142;width:13px;background:#c1c1c1}.after{flex:169}`,
`<ui-icon name="arrowUp" w="8"></ui-icon><span class="before"></span><span class="thumb"></span><span class="after"></span><ui-icon name="arrowDown" w="8"></ui-icon>`);

/* ---------- taskbar ---------- */
define('task-bar', `
:host{display:flex;align-items:center;height:40px;flex:none;background:linear-gradient(90deg,#cfe8ee,#d1e4ec 50%,#d6dbea 90%);color:#111;font:14px/20px ${UI}}
button{display:flex;align-items:center;justify-content:center;width:49px;height:40px;border:0;background:none;padding:0;color:#000}
.start{width:48px}
.search{display:flex;align-items:center;width:288px;height:40px;background:#fff;border:1px solid #c3c3c3;padding-left:11px;position:relative;overflow:hidden}
input{border:0;outline:0;background:none;margin-left:11px;padding:0;width:150px;font:14px/20px ${UI};color:#333}
input::placeholder{color:#333;opacity:1}
.earth{position:absolute;right:0;bottom:0}
.on{background:#edf5f8;border-bottom:2px solid #0078d7}
.space{flex:1}
.weather{display:flex;align-items:center;gap:9px;margin-right:19px;font-size:13px}
.tray{display:flex;align-items:center}.tray button{width:24px}
.clock{width:64px;text-align:center;font-size:12px;line-height:18px}
.tray .note{position:relative;width:40px;margin-right:8px}
.note span{position:absolute;left:19px;top:19px;width:17px;height:17px;border-radius:50%;background:#c9cbd0;border:1px solid #777;font:12px/14px ${UI}}
.peek{width:5px;border-left:1px solid #a5adb8;height:40px}`,
`<button class="start" aria-label="Start"><ui-icon name="windows" w="16"></ui-icon></button>
<div class="search"><ui-icon name="search" w="16"></ui-icon><input aria-label="Search" placeholder="Type here to search">
<svg class="earth" width="78" height="34" viewBox="0 0 78 34" aria-hidden="true"><defs><linearGradient id="h"><stop offset="0" stop-color="#fff3d0"/><stop offset=".5" stop-color="#f6c74f"/><stop offset="1" stop-color="#fff1d6"/></linearGradient><linearGradient id="e"><stop offset="0" stop-color="#3477c9"/><stop offset=".35" stop-color="#2d5f9a"/><stop offset=".45" stop-color="#2a2d2a"/><stop offset="1" stop-color="#3b3328"/></linearGradient><radialGradient id="g"><stop offset="0" stop-color="#ffd65a"/><stop offset=".5" stop-color="#d8a63a" stop-opacity=".8"/><stop offset="1" stop-color="#b98a2a" stop-opacity="0"/></radialGradient></defs><ellipse cx="47" cy="42" rx="46" ry="40" fill="url(#h)"/><ellipse cx="48" cy="44" rx="45" ry="39" fill="#fff8e4"/><ellipse cx="49" cy="46" rx="45" ry="40" fill="url(#e)"/><path fill="#234f91" d="M58 34q2-8 12-6l8 6zM12 26q6-5 12 1l-2 7H10z"/><path d="M36 8q20-4 42 12" fill="none" stroke="#c39a68" stroke-width="2" opacity=".8"/><g fill="url(#g)"><circle cx="36" cy="24" r="6"/><circle cx="55" cy="23" r="4"/><circle cx="45" cy="31" r="4"/><circle cx="20" cy="28" r="3"/><circle cx="27" cy="17" r="2.500"/></g><g fill="#c9a03a"><circle cx="40" cy="15" r="1"/><circle cx="48" cy="22" r="1"/><circle cx="60" cy="29" r="1.300"/><circle cx="67" cy="18" r="1.200"/><circle cx="24" cy="22" r="1.200"/><circle cx="31" cy="30" r="1.300"/><circle cx="72" cy="27" r="1"/><circle cx="35" cy="12" r="1"/><circle cx="30" cy="19" r="1"/><circle cx="53" cy="30" r="1.200"/></g></svg></div>
<button class="start" aria-label="Task view"><ui-icon name="taskview" w="16"></ui-icon></button>
<button aria-label="Mail"><ui-icon name="mailApp"></ui-icon></button>
<button aria-label="Edge"><ui-icon name="edge"></ui-icon></button>
<button aria-label="File Explorer"><ui-icon name="folder"></ui-icon></button>
<button aria-label="Store"><ui-icon name="store" w="23"></ui-icon></button>
<button class="on" aria-label="Chrome"><ui-icon name="chrome"></ui-icon></button>
<div class="space"></div>
<div class="weather"><ui-icon name="weather"></ui-icon><span>85°F</span><span>Mostly sunny</span></div>
<div class="tray"><button aria-label="Show hidden icons"><ui-icon name="chevUp" w="13"></ui-icon></button><button aria-label="Camera"><ui-icon name="meet"></ui-icon></button><button aria-label="OneDrive"><ui-icon name="cloud" w="16"></ui-icon></button><button aria-label="Battery"><ui-icon name="battery" w="17"></ui-icon></button><button aria-label="Network"><ui-icon name="wifi" w="13"></ui-icon></button><button aria-label="Volume"><ui-icon name="volume" w="17"></ui-icon></button>
<div class="clock">12:28 PM<br>4/15/2023</div>
<button class="note" aria-label="Notifications"><ui-icon name="notes"></ui-icon><span>1</span></button></div><div class="peek"></div>`);

/* ---------- whole window ---------- */
define('exam-desktop', `
:host{display:flex;flex-direction:column;height:100vh}
.view{flex:1;display:flex;min-height:0}
.page{flex:1;min-width:0;display:flex;flex-direction:column;overflow:hidden;position:relative}
.cols{flex:1;min-height:0;display:grid;grid-template-columns:140px minmax(0,1fr) 140px}
main{padding:0 19px 0 21px;min-height:0}
.current{margin-top:-25px;margin-bottom:18px}
.next{min-height:120px}
question-bar{position:absolute;left:79px;right:79px;bottom:0}`,
`<tab-strip></tab-strip><address-bar></address-bar>
<div class="view"><div class="page"><site-nav></site-nav>
<div class="cols"><side-art side="left"></side-art><main>
<question-card class="current"><span slot="title">Question 3</span><span slot="worth">(Essay Worth 15 points)</span>
<p>(07.06, 07.07 HC)</p>
<p>An airplane flies at 300 mph with a direction of 100° relative to the air. The plane experiences a wind that blows 40 mph with a direction of 60°.</p>
<p><b>Part A:</b> Write each of the vectors in linear form. Show all necessary calculations. (6 points)</p>
<p><b>Part B:</b> Find the sum of the vectors. Show all necessary calculations. (2 points)</p>
<p><b>Part C:</b> Find the true speed and direction of the airplane. Round the speed to the thousandths place and the direction to the nearest degree. Show all necessary calculations. (7 points)</p>
<rich-editor></rich-editor>
<div class="media"><media-button><ui-icon name="mic" w="7"></ui-icon>Add Audio</media-button><media-button><ui-icon name="video" w="10"></ui-icon>Add Video</media-button></div>
</question-card><question-card class="next"></question-card></main><side-art side="right"></side-art></div>
<question-bar></question-bar></div><scroll-track></scroll-track></div>
<task-bar></task-bar>`);
</script>
</body>
</html>
